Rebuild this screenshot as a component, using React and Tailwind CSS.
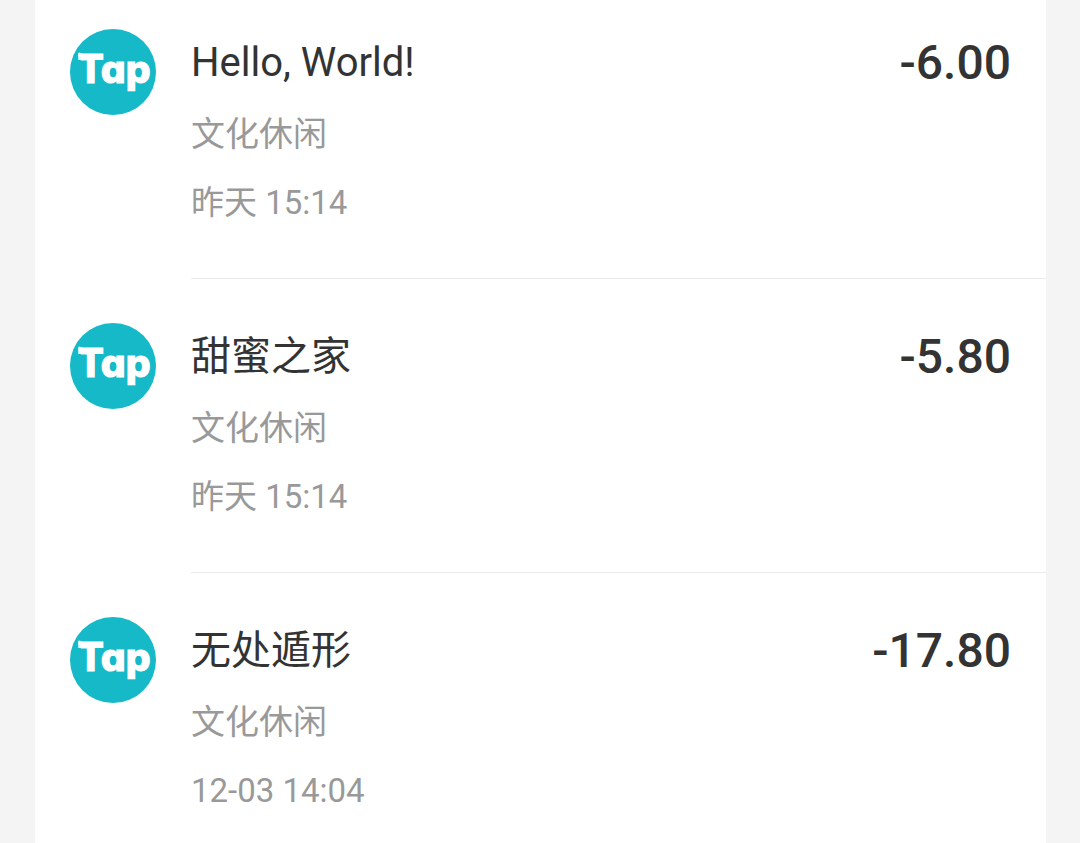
const bills = [
  { id: 1, title: "Hello, World!", category: "文化休闲", time: "昨天 15:14", amount: "-6.00" },
  { id: 2, title: "甜蜜之家", category: "文化休闲", time: "昨天 15:14", amount: "-5.80" },
  { id: 3, title: "无处遁形", category: "文化休闲", time: "12-03 14:04", amount: "-17.80" },
];

function TapLogo() {
  return (
    <svg viewBox="0 0 86 86" className="size-[86px] shrink-0" role="img" aria-label="Tap">
      <circle cx="43" cy="43" r="43" fill="#15b9c8" />
      {/* brush start on the crossbar of the T */}
      <path d="M8 25 Q8.4 22.8 10 23.8 Q12.5 25.4 17 25.4 L17 31.4 L11 31.4 Q8.4 29.4 8 25Z" fill="#fff" />
      <text
        x="44"
        y="54"
        textAnchor="middle"
        fill="#fff"
        stroke="#fff"
        strokeWidth="1"
        className="font-['Inter',sans-serif] text-[39px] font-extrabold [font-feature-settings:'cv11']"
      >
        Tap
      </text>
    </svg>
  );
}

function BillItem({ bill }) {
  return (
    <li className="group flex gap-[35px] pl-[35px] pt-11 first:pt-[29px]">
      <TapLogo />
      <div className="flex min-w-0 flex-1 items-start justify-between gap-4 border-b border-[#ebebeb] pb-[43px] pr-[35px] group-last:border-b-0 group-last:pb-4">
        <div className="flex min-w-0 flex-col gap-1">
          <h2 className="text-[40px] leading-[68px] text-[#333]">{bill.title}</h2>
          <p className="text-[34px] leading-[66px] text-[#999]">{bill.category}</p>
          <p className="text-[33px] leading-[64px] text-[#999]">{bill.time}</p>
        </div>
        <span className="text-[48px] font-medium leading-[68px] text-[#333]">{bill.amount}</span>
      </div>
    </li>
  );
}

export default function App() {
  return (
    <div className="flex min-h-screen bg-[#f4f4f4] pl-[35px] pr-[34px] font-['Roboto','Noto_Sans_CJK_SC',sans-serif]">
      <ul className="flex-1 bg-white">
        {bills.map((bill) => (
          <BillItem key={bill.id} bill={bill} />
        ))}
      </ul>
    </div>
  );
}
